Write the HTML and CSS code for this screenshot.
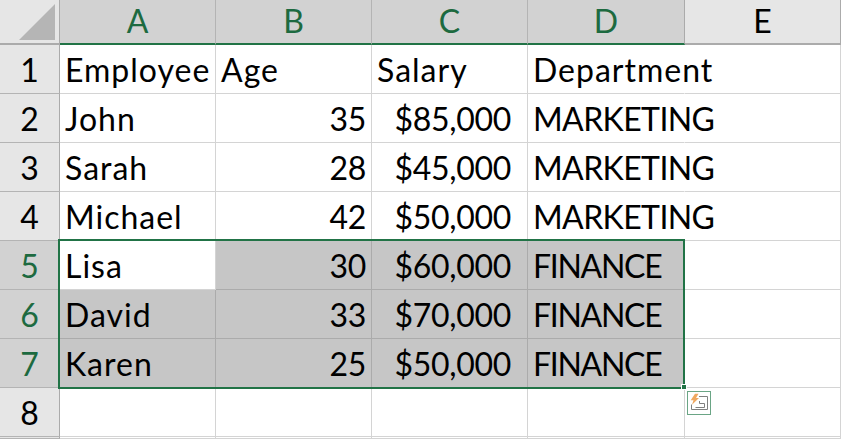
FILE: index.html
```html
<!DOCTYPE html>
<html lang="en">
<head>
<meta charset="utf-8">
<title>Sheet</title>
<link rel="stylesheet" href="styles.css">
</head>
<body>
<div class="sheet">
  <div class="corner"><svg class="corner-tri" width="40" height="40" viewBox="0 0 40 40"><path d="M39 3V39H3Z" fill="#b5b5b5"/></svg></div>
  <div class="ch sel">A</div><div class="ch sel">B</div><div class="ch sel">C</div><div class="ch sel end">D</div><div class="ch">E</div>

  <div class="rh">1</div>
  <div class="c">Employee</div><div class="c">Age</div><div class="c">Salary</div><div class="c over">Department</div><div class="c"></div>

  <div class="rh">2</div>
  <div class="c">John</div><div class="c num">35</div><div class="c num money">$85,000</div><div class="c over caps">MARKETING</div><div class="c"></div>

  <div class="rh">3</div>
  <div class="c">Sarah</div><div class="c num">28</div><div class="c num money">$45,000</div><div class="c over caps">MARKETING</div><div class="c"></div>

  <div class="rh">4</div>
  <div class="c">Michael</div><div class="c num">42</div><div class="c num money">$50,000</div><div class="c over caps">MARKETING</div><div class="c"></div>

  <div class="rh sel">5</div>
  <div class="c">Lisa</div><div class="c num g">30</div><div class="c num money g">$60,000</div><div class="c g fin">FINANCE</div><div class="c"></div>

  <div class="rh sel">6</div>
  <div class="c g">David</div><div class="c num g">33</div><div class="c num money g">$70,000</div><div class="c g fin">FINANCE</div><div class="c"></div>

  <div class="rh sel">7</div>
  <div class="c g">Karen</div><div class="c num g">25</div><div class="c num money g">$50,000</div><div class="c g fin">FINANCE</div><div class="c"></div>

  <div class="rh">8</div>
  <div class="c"></div><div class="c"></div><div class="c"></div><div class="c"></div><div class="c"></div>

  <div class="rh"></div>
  <div class="c"></div><div class="c"></div><div class="c"></div><div class="c"></div><div class="c"></div>

  <div class="selection"><span class="handle"></span></div>
  <div class="qa">
    <svg width="22" height="22" viewBox="0 0 22 22">
      <path d="M11 4.5H19.5V17.5H3.5V12.5" fill="none" stroke="#808080"/>
      <path d="M7.5 15.5H16.5V11.5H11.5V9" fill="none" stroke="#808080"/>
      <path d="M7 1.7L2.7 8.2H5.5L4 12.7L11 6H8L10.5 1.7Z" fill="#f0a860"/>
    </svg>
  </div>
</div>
</body>
</html>
```
FILE: styles.css
```css
html, body {
  margin: 0;
  padding: 0;
  background: #fff;
}

body {
  width: 842px;
  height: 439px;
  overflow: hidden;
}

.sheet {
  position: relative;
  display: grid;
  grid-template-columns: 60px 156px 156px 156px 157px 156px;
  grid-template-rows: 45px repeat(8, 49px) 2px;
  width: 842px;
  height: 439px;
  overflow: hidden;
  font-family: Lato, "Liberation Sans", sans-serif;
  font-size: 32px;
  color: #000;
}

.corner {
  display: flex;
  align-items: flex-end;
  justify-content: flex-end;
  padding: 0 3px 2px 0;
  box-sizing: border-box;
  background: #e6e6e6;
  border-right: 1px solid #ababab;
  border-bottom: 2px solid #ababab;
}

.ch {
  display: flex;
  align-items: center;
  justify-content: center;
  box-sizing: border-box;
  background: #e6e6e6;
  border-right: 1px solid #ababab;
  border-bottom: 2px solid #ababab;
  padding-bottom: 2px;
}

.ch.sel {
  background: #d2d2d2;
  color: #1d6a40;
  border-right-color: #b4b4b4;
  border-bottom: 2px solid #217346;
}

.ch.end {
  border-right-color: #ababab;
}

.rh {
  display: flex;
  align-items: center;
  justify-content: center;
  box-sizing: border-box;
  background: #e6e6e6;
  border-right: 1px solid #ababab;
  border-bottom: 1px solid #b4b4b4;
}

.rh.sel {
  background: #d2d2d2;
  color: #1d6a40;
}

.c {
  display: flex;
  align-items: center;
  box-sizing: border-box;
  padding: 0 5px;
  white-space: nowrap;
  letter-spacing: 1px;
  border-right: 1px solid #d4d4d4;
  border-bottom: 1px solid #d4d4d4;
}

.num {
  justify-content: flex-end;
  letter-spacing: -0.3px;
}

.money {
  padding-right: 16px;
}

.over {
  border-right-color: transparent;
}

.caps {
  letter-spacing: -0.6px;
}

.fin {
  letter-spacing: -1.3px;
}

.g {
  background: #c6c6c6;
  border-right-color: #ababab;
  border-bottom-color: #ababab;
}

.selection {
  position: absolute;
  left: 58px;
  top: 239px;
  width: 627px;
  height: 150px;
  box-sizing: border-box;
  border: 2px solid #217346;
  pointer-events: none;
}

.handle {
  position: absolute;
  right: -4px;
  bottom: -3px;
  width: 4px;
  height: 4px;
  background: #217346;
  border: 1px solid #fff;
}

.qa {
  position: absolute;
  left: 687px;
  top: 391px;
  width: 24px;
  height: 24px;
  box-sizing: border-box;
  border: 1px solid #6aa585;
  background: #fff;
  display: flex;
  align-items: center;
  justify-content: center;
}
```
